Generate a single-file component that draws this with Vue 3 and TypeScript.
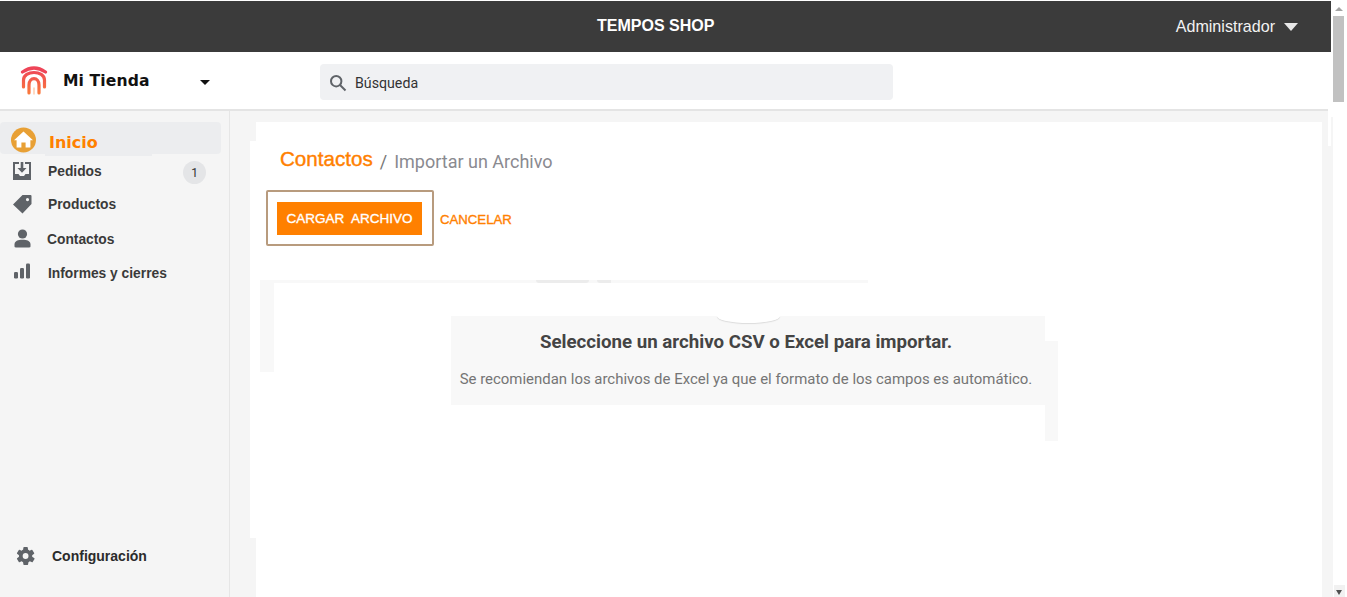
<script setup lang="ts">
interface NavItem {
  label: string
  icon: string
  badge?: string
}
const items: NavItem[] = [
  { label: 'Pedidos', icon: 'inbox', badge: '1' },
  { label: 'Productos', icon: 'tag' },
  { label: 'Contactos', icon: 'user' },
  { label: 'Informes y cierres', icon: 'bars' },
]
</script>

<template>
  <div class="page">
    <div class="content">
      <header class="topbar">
        <span class="shop">TEMPOS SHOP</span>
        <span class="admin">Administrador<i class="admin-caret"></i></span>
      </header>
      <div class="subbar">
        <div class="brand">
          <svg class="logo" width="30" height="32" viewBox="0 0 30 32" fill="none" stroke-linecap="round">
            <defs>
              <linearGradient id="lg" gradientUnits="userSpaceOnUse" x1="0" y1="4" x2="0" y2="30">
                <stop offset="0" stop-color="#ee4558" />
                <stop offset="1" stop-color="#fb7d3a" />
              </linearGradient>
            </defs>
            <path d="M3.5 7Q15 -1 26.5 7" stroke="#ee4558" stroke-width="3.2" />
            <path d="M4.5 22V15C4.5 5 25.5 5 25.5 15V22" stroke="url(#lg)" stroke-width="3.2" />
            <path d="M10 28V20C10 11.5 20 11.5 20 20V28" stroke="url(#lg)" stroke-width="3.2" />
            <path d="M15 29V23" stroke="#ffc9a8" stroke-width="1.4" />
          </svg>
          <span class="brand-name">Mi Tienda</span>
          <i class="brand-caret"></i>
        </div>
        <div class="search">
          <svg class="search-icon" width="18" height="18" viewBox="0 0 18 18" fill="none" stroke="#5f6368" stroke-width="2">
            <circle cx="7.2" cy="7.2" r="5.2" />
            <path d="M11 11L16.5 16.5" />
          </svg>
          <span>Búsqueda</span>
        </div>
      </div>
      <div class="body">
        <aside class="sidebar">
          <div class="nav-top">
            <div class="home">
              <svg class="home-icon" width="28" height="26" viewBox="0 0 28 26">
                <circle cx="13.5" cy="13" r="12.5" fill="#e8a035" />
                <path d="M13.5 4.5L23 13.2H20.4V20.5H15.6V15.5H11.4V20.5H6.6V13.2H4Z" fill="#fff" />
              </svg>
              <span>Inicio</span>
            </div>
            <div v-for="item in items" :key="item.label" class="nav-item">
              <svg v-if="item.icon === 'inbox'" class="nav-icon" width="20" height="20" viewBox="0 0 20 20">
                <path fill-rule="evenodd" d="M1 1H7V3H3V13H6.5L8 15H12L13.5 13H17V3H13V1H19V19H1Z" fill="#5f6368" />
                <path d="M8.7 1H11.3V7H14.5L10 11.8L5.5 7H8.7Z" fill="#5f6368" />
              </svg>
              <svg v-else-if="item.icon === 'tag'" class="nav-icon" width="20" height="20" viewBox="0 0 20 20">
                <path fill-rule="evenodd" d="M10.5 1H18.5A1 1 0 0 1 19.5 2V10L10.5 19.5L1 10.5ZM15.5 4A1.6 1.6 0 1 0 15.5 7.2A1.6 1.6 0 1 0 15.5 4Z" fill="#5f6368" />
              </svg>
              <svg v-else-if="item.icon === 'user'" class="nav-icon" width="20" height="20" viewBox="0 0 20 20">
                <circle cx="10.5" cy="5" r="4.6" fill="#5f6368" />
                <path d="M2.5 17.5V15.5C2.5 12 6 10.8 10.5 10.8S18.5 12 18.5 15.5V17.5Q18.5 18.5 17 18.5H4Q2.5 18.5 2.5 17.5Z" fill="#5f6368" />
              </svg>
              <svg v-else class="nav-icon" width="20" height="20" viewBox="0 0 20 20">
                <rect x="2" y="9" width="4" height="6.5" rx="1.2" fill="#5f6368" />
                <rect x="8" y="5" width="4" height="10.5" rx="1.2" fill="#5f6368" />
                <rect x="14" y="0.5" width="4" height="15" rx="1.2" fill="#5f6368" />
              </svg>
              <span class="nav-label">{{ item.label }}</span>
              <span v-if="item.badge" class="badge">{{ item.badge }}</span>
            </div>
          </div>
          <div class="settings">
            <svg width="20" height="20" viewBox="0 0 24 24">
              <path fill="#5f6368" fill-rule="evenodd" d="M19.4 13a7.6 7.6 0 0 0 0-2l2.3-1.8a.6.6 0 0 0 .1-.7l-2.2-3.8a.6.6 0 0 0-.7-.2l-2.7 1.1a8 8 0 0 0-1.7-1l-.4-2.9a.6.6 0 0 0-.6-.5H9.5a.6.6 0 0 0-.6.5l-.4 2.9a8 8 0 0 0-1.7 1L4.1 4.5a.6.6 0 0 0-.7.2L1.2 8.5a.6.6 0 0 0 .1.7L3.6 11a7.6 7.6 0 0 0 0 2l-2.3 1.8a.6.6 0 0 0-.1.7l2.2 3.8c.1.3.4.3.7.2l2.7-1.1a8 8 0 0 0 1.7 1l.4 2.9c0 .3.3.5.6.5h4.4c.3 0 .5-.2.6-.5l.4-2.9a8 8 0 0 0 1.7-1l2.7 1.1c.3.1.6 0 .7-.2l2.2-3.8a.6.6 0 0 0-.1-.7ZM11.5 15.5a3.5 3.5 0 1 1 0-7a3.5 3.5 0 0 1 0 7Z" />
            </svg>
            <span>Configuración</span>
          </div>
        </aside>
        <main class="main">
          <div class="sheet">
            <div class="crumbs">
              <span class="crumb-link">Contactos</span>
              <span class="crumb-sep">/</span>
              <span class="crumb-current">Importar un Archivo</span>
            </div>
            <div class="actions">
              <div class="focus-box"><button class="btn-primary">CARGAR&nbsp; ARCHIVO</button></div>
              <button class="btn-link">CANCELAR</button>
            </div>
            <section class="notice">
              <h2>Seleccione un archivo CSV o Excel para importar.</h2>
              <p>Se recomiendan los archivos de Excel ya que el formato de los campos es automático.</p>
            </section>
          </div>
          <i class="patch patch-left"></i>
          <i class="patch patch-strip-top"></i>
          <i class="patch patch-strip-left"></i>
          <i class="patch patch-notice"></i>
          <i class="patch patch-edge"></i>
          <i class="patch patch-edge-top"></i>
          <i class="arc-top arc-top-a"></i>
          <i class="arc-top arc-top-b"></i>
          <i class="arc"></i>
        </main>
      </div>
    </div>
    <div class="scrollbar">
      <div class="scroll-up"></div>
      <div class="scroll-thumb"></div>
      <div class="scroll-track"></div>
      <div class="scroll-down"></div>
    </div>
  </div>
</template>

<style>
html, body { margin: 0; overflow: hidden; background: #fff; }
</style>

<style scoped>
.page {
  width: 1347px;
  height: 597px;
  display: flex;
  overflow: hidden;
  background: #fff;
  font-family: "Liberation Sans", Arial, sans-serif;
}
.content { width: 1333px; flex: none; display: flex; flex-direction: column; height: 597px; padding-top: 1px; box-sizing: border-box; }
.topbar {
  height: 51px;
  flex: none;
  margin-right: 2px;
  background: #3b3b3b;
  color: #fff;
  display: flex;
  align-items: center;
}
.shop { font-weight: 700; font-size: 16px; margin-left: 597px; margin-top: -2px; }
.admin {
  margin-left: auto;
  margin-right: 33px;
  font-family: "Liberation Sans", Arial, sans-serif;
  font-size: 16.1px;
  color: #f2f2f2;
  display: flex;
  align-items: center;
  margin-top: -1px;
}
.admin-caret {
  width: 0; height: 0;
  margin-left: 9px;
  margin-top: 2px;
  border-left: 7px solid transparent;
  border-right: 7px solid transparent;
  border-top: 8px solid #e8e8e8;
}
.subbar {
  height: 59px;
  flex: none;
  box-sizing: border-box;
  display: flex;
  align-items: center;
  background: #fff;
  border-bottom: 2px solid #e4e4e4;
}
.brand { width: 320px; display: flex; align-items: center; flex: none; height: 100%; }
.logo { margin-left: 19px; margin-top: 0; }
.brand-name {
  font-family: "DejaVu Sans", sans-serif;
  font-weight: 700;
  font-size: 15.6px;
  margin-left: 14px;
  color: #111;
  letter-spacing: 0.1px;
}
.brand-caret {
  width: 0; height: 0;
  margin-left: 50px;
  margin-top: 3px;
  border-left: 5.5px solid transparent;
  border-right: 5.5px solid transparent;
  border-top: 5px solid #111;
}
.search {
  width: 573px;
  height: 36px;
  margin-top: 3px;
  background: #f0f1f3;
  border-radius: 4px;
  display: flex;
  align-items: center;
  padding-left: 9px;
  box-sizing: border-box;
  font-family: Roboto, sans-serif;
  font-size: 14.2px;
  color: #333;
}
.search-icon { margin-top: 2px; }
.search span { margin-left: 8px; margin-top: 2px; }
.body { flex: 1; display: flex; min-height: 0; }
.sidebar {
  width: 230px;
  flex: none;
  box-sizing: border-box;
  background: #f5f5f5;
  border-right: 1px solid #e6e6e6;
  display: flex;
  flex-direction: column;
  justify-content: space-between;
}
.nav-top { padding-top: 11px; }
.home {
  height: 32px;
  width: 221px;
  background: #ecedef;
  border-radius: 4px;
  display: flex;
  align-items: center;
  color: #ff8000;
  font-family: "DejaVu Sans", sans-serif;
  font-weight: 700;
  font-size: 16px;
  position: relative;
}
.home::after {
  content: "";
  position: absolute;
  left: 45px;
  bottom: -2px;
  width: 107px;
  height: 2px;
  background: #ecedef;
}
.home-icon { margin-left: 10px; margin-top: 4px; }
.home span { margin-left: 11px; margin-top: 8px; }
.nav-item {
  height: 34px;
  display: flex;
  align-items: center;
  position: relative;
  font-weight: 700;
  font-size: 13.8px;
  color: #3a3a3a;
}
.nav-item:nth-child(3) { margin-top: -1px; }
.nav-item:nth-child(4) { margin-top: 1px; }
.nav-icon { margin-left: 12px; flex: none; }
.nav-label { margin-left: 16px; }
.nav-item:nth-child(4) .nav-label { margin-left: 15px; }
.badge {
  position: absolute;
  left: 183px;
  top: 7px;
  width: 23px;
  height: 23px;
  border-radius: 50%;
  background: #e4e5e7;
  font-family: Roboto, sans-serif;
  font-weight: 400;
  font-size: 12px;
  display: flex;
  align-items: center;
  justify-content: center;
  color: #333;
}
.settings {
  display: flex;
  align-items: center;
  height: 20px;
  margin-bottom: 31px;
  margin-left: 16px;
  font-weight: 700;
  font-size: 14px;
  color: #2b2b2b;
}
.settings span { margin-left: 16px; }
.main { flex: 1; background: #f5f5f5; position: relative; padding: 11px 11px 0 26px; min-width: 0; }
.sheet { background: #fff; height: 100%; position: relative; padding-top: 25px; box-sizing: border-box; }
.crumbs { display: flex; align-items: flex-start; margin-left: 24px; height: 25px; line-height: 24px; }
.crumb-link { color: #ff8000; font-size: 20.6px; -webkit-text-stroke: 0.4px #ff8000; }
.crumb-sep { color: #777; font-family: Roboto, sans-serif; font-size: 18px; margin-left: 7px; margin-top: 3px; }
.crumb-current { color: #8a8a90; font-family: Roboto, sans-serif; font-size: 18px; margin-left: 7px; margin-top: 3px; }
.actions { display: flex; align-items: center; margin-left: 10px; margin-top: 18px; }
.focus-box {
  width: 168px;
  height: 56px;
  box-sizing: border-box;
  border: 2px solid #b89b7e;
  border-radius: 2px;
  display: flex;
  align-items: center;
  padding-left: 9px;
}
button { font-family: "Liberation Sans", Arial, sans-serif; border: 0; padding: 0; cursor: pointer; }
.btn-primary {
  width: 145px;
  height: 33px;
  background: #ff8000;
  color: #fff;
  font-size: 13.5px;
  text-align: center;
  -webkit-text-stroke: 0.35px #fff;
}
.btn-link { background: transparent; color: #ff8000; font-size: 13.2px; margin-left: 6px; margin-top: 2px; -webkit-text-stroke: 0.35px #ff8000; }
.notice {
  position: absolute;
  left: 195px;
  top: 194px;
  width: 594px;
  height: 89px;
  padding-right: 4px;
  box-sizing: border-box;
  background: #f8f8f8;
  text-align: center;
  font-family: Roboto, sans-serif;
  z-index: 2;
}
.notice h2 { margin: 15px 0 0; font-size: 18.7px; line-height: 22px; font-weight: 700; color: #444; }
.notice p { margin: 16px 0 0; font-size: 14.95px; line-height: 20px; color: #757575; }
.patch { position: absolute; background: #f8f8f8; display: block; }
.patch-left { left: 20px; top: 30px; width: 6px; height: 397px; background: #fff; }
.patch-strip-top { left: 30px; top: 169px; width: 608px; height: 3px; }
.patch-strip-left { left: 30px; top: 169px; width: 14px; height: 92px; }
.patch-notice { left: 815px; top: 230px; width: 13px; height: 100px; }
.patch-edge { left: 1098px; top: 0; width: 3px; height: 35px; background: #fff; }
.patch-edge-top { left: 1098px; top: -2px; width: 5px; height: 8px; background: #fff; }
.arc-top { position: absolute; display: block; top: 169px; height: 3px; background: #ececec; }
.arc-top-a { left: 306px; width: 53px; border-radius: 0 0 8px 8px; }
.arc-top-b { left: 367px; width: 14px; border-radius: 0 0 0 8px; }
.arc {
  position: absolute;
  left: 487px;
  top: 205px;
  width: 63px;
  height: 7px;
  background: #fff;
  border-radius: 0 0 32px 32px / 0 0 7px 7px;
  box-shadow: 0 1px 1px #dcdcdc;
  z-index: 3;
}
.scrollbar { width: 14px; flex: none; display: flex; flex-direction: column; background: #fff; }
.scroll-up { height: 16px; position: relative; }
.scroll-up::after {
  content: "";
  position: absolute;
  left: 2px;
  top: 7px;
  border-left: 4px solid transparent;
  border-right: 4px solid transparent;
  border-bottom: 4px solid #a3a3a3;
}
.scroll-thumb { height: 86px; width: 11px; background: #c1c1c1; }
.scroll-track { flex: 1; }
.scroll-down { height: 12px; width: 11px; margin-left: 1px; position: relative; background: #f1f1f1; }
.scroll-down::after {
  content: "";
  position: absolute;
  left: 2px;
  top: 5px;
  border-left: 3.5px solid transparent;
  border-right: 3.5px solid transparent;
  border-top: 5px solid #505050;
}
</style>
